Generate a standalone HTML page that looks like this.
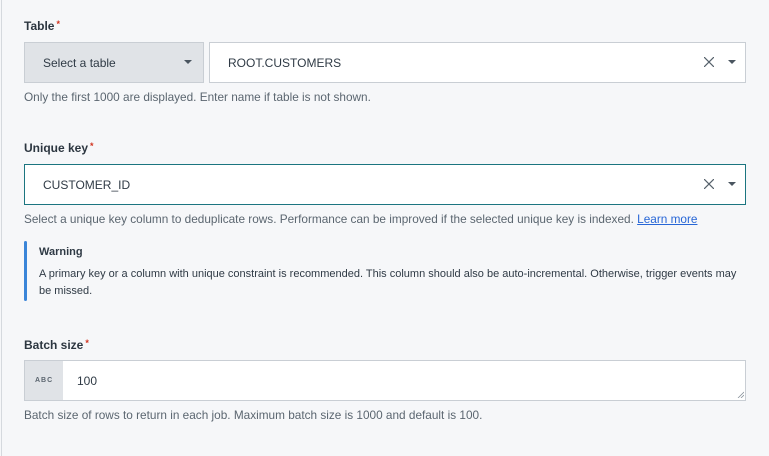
<!DOCTYPE html>
<html><head><style>
body{margin:0;width:769px;height:456px;background:#f6f7f9;font-family:"Liberation Sans",sans-serif;font-size:12px;color:#2f3a45;position:relative;overflow:hidden}
.vl{position:absolute;left:1px;top:0;width:1px;height:456px;background:#d5d9de}
.a{position:absolute}
.lbl{font-weight:bold;font-size:12px;color:#2c3640}
.lbl span{color:#d1331f;font-size:9px;vertical-align:top;margin-left:2px}
.box{position:absolute;background:#fff;border:1px solid #c9ced4;box-sizing:border-box}
.hint{position:absolute;color:#5b6670;font-size:11.8px}
.x{position:absolute;width:10px;height:10px}
.tri{position:absolute;width:0;height:0;border-left:4px solid transparent;border-right:4px solid transparent;border-top:4px solid #4a5560}
</style></head><body>
<div class="vl"></div>
<div class="a lbl" style="left:24px;top:19px">Table<span>*</span></div>
<div class="box" style="left:24px;top:42px;width:180px;height:41px;background:#e0e3e7"></div>
<div class="a" style="left:43px;top:56px">Select a table</div>
<div class="tri" style="left:184px;top:60px"></div>
<div class="box" style="left:209px;top:42px;width:537px;height:41px"></div>
<div class="a" style="left:228px;top:56px">ROOT.CUSTOMERS</div>
<svg class="x" style="left:704px;top:57px" viewBox="0 0 10 10"><path d="M0 0L10 10M10 0L0 10" stroke="#56616b" stroke-width="1.2"/></svg>
<div class="tri" style="left:728px;top:60px"></div>
<div class="hint" style="left:24px;top:90px">Only the first 1000 are displayed. Enter name if table is not shown.</div>

<div class="a lbl" style="left:24px;top:141px">Unique key<span>*</span></div>
<div class="box" style="left:24px;top:164px;width:722px;height:41px;border-color:#1b7580"></div>
<div class="a" style="left:43px;top:178px">CUSTOMER_ID</div>
<svg class="x" style="left:704px;top:179px" viewBox="0 0 10 10"><path d="M0 0L10 10M10 0L0 10" stroke="#56616b" stroke-width="1.2"/></svg>
<div class="tri" style="left:728px;top:182px"></div>
<div class="hint" style="left:24px;top:212px">Select a unique key column to deduplicate rows. Performance can be improved if the selected unique key is indexed. <span style="color:#2766d6;text-decoration:underline">Learn more</span></div>

<div class="a" style="left:24px;top:241px;width:3px;height:60px;background:#3a85d8;border-radius:2px"></div>
<div class="a" style="left:39px;top:246px;font-weight:bold;font-size:11px">Warning</div>
<div class="a" style="left:39px;top:266px;font-size:11px;line-height:17px;width:705px">A primary key or a column with unique constraint is recommended. This column should also be auto-incremental. Otherwise, trigger events may be missed.</div>

<div class="a lbl" style="left:24px;top:338px">Batch size<span>*</span></div>
<div class="box" style="left:24px;top:360px;width:722px;height:41px"></div>
<div class="a" style="left:25px;top:361px;width:38px;height:39px;background:#e0e3e7"></div>
<div class="a" style="left:35px;top:377px;font-size:7px;font-weight:bold;letter-spacing:1px;color:#5b656f">ABC</div>
<div class="a" style="left:77px;top:374px">100</div>
<svg class="a" style="left:737px;top:391px" width="7" height="7" viewBox="0 0 7 7"><path d="M7 1L1 7M7 4L4 7" stroke="#8a939c" stroke-width="0.8"/></svg>
<div class="hint" style="left:24px;top:408px">Batch size of rows to return in each job. Maximum batch size is 1000 and default is 100.</div>
</body></html>
